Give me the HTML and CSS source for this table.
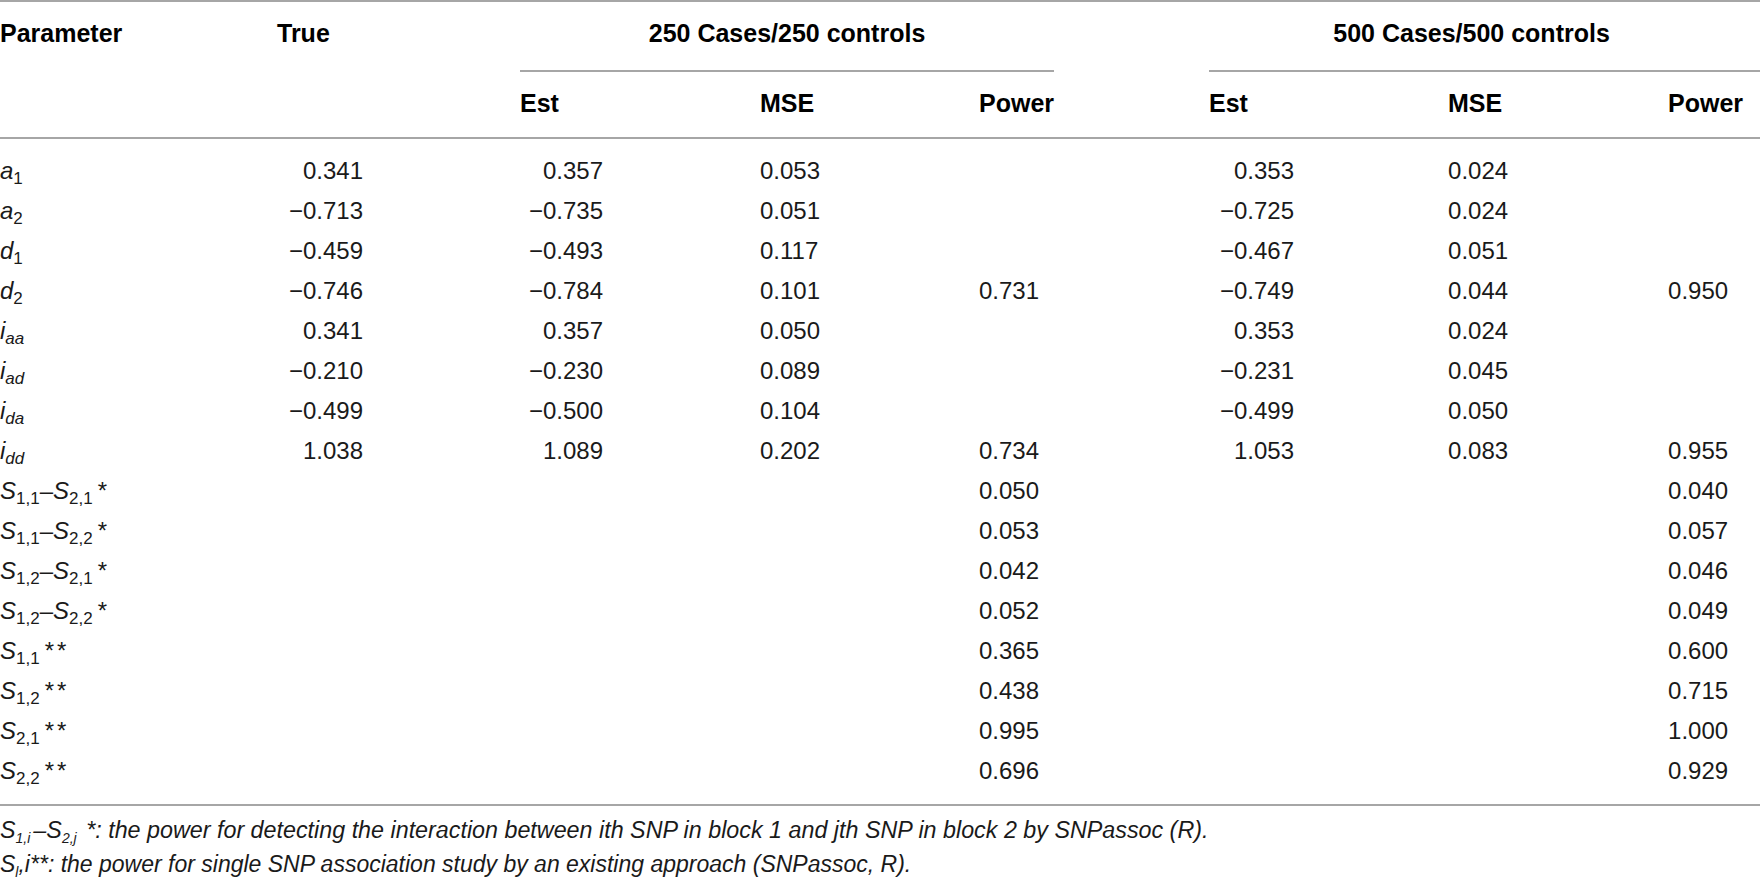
FILE: index.html
```html
<!DOCTYPE html>
<html lang="en">
<head>
    <meta charset="UTF-8">
    <title>Simulation results</title>
    <link rel="stylesheet" href="styles.css">
</head>
<body>
    <table class="results">
        <colgroup>
            <col class="c-param">
            <col class="c-true">
            <col class="c-est">
            <col class="c-mse">
            <col class="c-power">
            <col class="c-est2">
            <col class="c-mse2">
            <col class="c-power2">
        </colgroup>
        <thead>
            <tr class="head-top">
                <th rowspan="2">Parameter</th>
                <th rowspan="2">True</th>
                <th colspan="3" class="group group-a"><div class="group-label">250 Cases/250 controls</div></th>
                <th colspan="3" class="group group-b"><div class="group-label">500 Cases/500 controls</div></th>
            </tr>
            <tr class="head-sub">
                <th>Est</th>
                <th>MSE</th>
                <th>Power</th>
                <th>Est</th>
                <th>MSE</th>
                <th>Power</th>
            </tr>
        </thead>
        <tbody>
            <tr>
                <td class="param"><i>a</i><sub>1</sub></td>
                <td class="num">0.341</td>
                <td class="num">0.357</td>
                <td>0.053</td>
                <td></td>
                <td class="num est2">0.353</td>
                <td>0.024</td>
                <td></td>
            </tr>
            <tr>
                <td class="param"><i>a</i><sub>2</sub></td>
                <td class="num">&minus;0.713</td>
                <td class="num">&minus;0.735</td>
                <td>0.051</td>
                <td></td>
                <td class="num est2">&minus;0.725</td>
                <td>0.024</td>
                <td></td>
            </tr>
            <tr>
                <td class="param"><i>d</i><sub>1</sub></td>
                <td class="num">&minus;0.459</td>
                <td class="num">&minus;0.493</td>
                <td>0.117</td>
                <td></td>
                <td class="num est2">&minus;0.467</td>
                <td>0.051</td>
                <td></td>
            </tr>
            <tr>
                <td class="param"><i>d</i><sub>2</sub></td>
                <td class="num">&minus;0.746</td>
                <td class="num">&minus;0.784</td>
                <td>0.101</td>
                <td>0.731</td>
                <td class="num est2">&minus;0.749</td>
                <td>0.044</td>
                <td>0.950</td>
            </tr>
            <tr>
                <td class="param"><i>i</i><sub><i>aa</i></sub></td>
                <td class="num">0.341</td>
                <td class="num">0.357</td>
                <td>0.050</td>
                <td></td>
                <td class="num est2">0.353</td>
                <td>0.024</td>
                <td></td>
            </tr>
            <tr>
                <td class="param"><i>i</i><sub><i>ad</i></sub></td>
                <td class="num">&minus;0.210</td>
                <td class="num">&minus;0.230</td>
                <td>0.089</td>
                <td></td>
                <td class="num est2">&minus;0.231</td>
                <td>0.045</td>
                <td></td>
            </tr>
            <tr>
                <td class="param"><i>i</i><sub><i>da</i></sub></td>
                <td class="num">&minus;0.499</td>
                <td class="num">&minus;0.500</td>
                <td>0.104</td>
                <td></td>
                <td class="num est2">&minus;0.499</td>
                <td>0.050</td>
                <td></td>
            </tr>
            <tr>
                <td class="param"><i>i</i><sub><i>dd</i></sub></td>
                <td class="num">1.038</td>
                <td class="num">1.089</td>
                <td>0.202</td>
                <td>0.734</td>
                <td class="num est2">1.053</td>
                <td>0.083</td>
                <td>0.955</td>
            </tr>
            <tr>
                <td class="param"><i>S</i><sub>1,1</sub>&ndash;<i>S</i><sub>2,1</sub><span class="mark">*</span></td>
                <td></td><td></td><td></td>
                <td>0.050</td>
                <td></td><td></td>
                <td>0.040</td>
            </tr>
            <tr>
                <td class="param"><i>S</i><sub>1,1</sub>&ndash;<i>S</i><sub>2,2</sub><span class="mark">*</span></td>
                <td></td><td></td><td></td>
                <td>0.053</td>
                <td></td><td></td>
                <td>0.057</td>
            </tr>
            <tr>
                <td class="param"><i>S</i><sub>1,2</sub>&ndash;<i>S</i><sub>2,1</sub><span class="mark">*</span></td>
                <td></td><td></td><td></td>
                <td>0.042</td>
                <td></td><td></td>
                <td>0.046</td>
            </tr>
            <tr>
                <td class="param"><i>S</i><sub>1,2</sub>&ndash;<i>S</i><sub>2,2</sub><span class="mark">*</span></td>
                <td></td><td></td><td></td>
                <td>0.052</td>
                <td></td><td></td>
                <td>0.049</td>
            </tr>
            <tr>
                <td class="param"><i>S</i><sub>1,1</sub><span class="mark">**</span></td>
                <td></td><td></td><td></td>
                <td>0.365</td>
                <td></td><td></td>
                <td>0.600</td>
            </tr>
            <tr>
                <td class="param"><i>S</i><sub>1,2</sub><span class="mark">**</span></td>
                <td></td><td></td><td></td>
                <td>0.438</td>
                <td></td><td></td>
                <td>0.715</td>
            </tr>
            <tr>
                <td class="param"><i>S</i><sub>2,1</sub><span class="mark">**</span></td>
                <td></td><td></td><td></td>
                <td>0.995</td>
                <td></td><td></td>
                <td>1.000</td>
            </tr>
            <tr>
                <td class="param"><i>S</i><sub>2,2</sub><span class="mark">**</span></td>
                <td></td><td></td><td></td>
                <td>0.696</td>
                <td></td><td></td>
                <td>0.929</td>
            </tr>
        </tbody>
    </table>
    <div class="notes">
        <p class="note-pair"><i>S</i><sub>1,<i>i</i></sub>&ndash;<i>S</i><sub>2,<i>j</i></sub> *: the power for detecting the interaction between ith SNP in block 1 and jth SNP in block 2 by SNPassoc (R).</p>
        <p><i>S</i><sub><i>l</i></sub>,<i>i</i>**: the power for single SNP association study by an existing approach (SNPassoc, R).</p>
    </div>
</body>
</html>
```

FILE: styles.css
```css
body {
    margin: 0;
    background: #fff;
    color: #1a1a1a;
    font-family: "Liberation Sans", Arial, sans-serif;
}
.results {
    width: 1760px;
    table-layout: fixed;
    border-collapse: collapse;
    border-top: 2px solid #a6a6a6;
    border-bottom: 2px solid #a6a6a6;
}
.c-param { width: 277px; }
.c-true { width: 243px; }
.c-est { width: 240px; }
.c-mse { width: 219px; }
.c-power { width: 230px; }
.c-est2 { width: 239px; }
.c-mse2 { width: 220px; }
.c-power2 { width: 92px; }

th {
    font-size: 25px;
    line-height: 30px;
    font-weight: bold;
    color: #000;
    text-align: left;
    vertical-align: top;
    padding: 16px 0 0 0;
    white-space: nowrap;
}
.head-sub th {
    padding: 16px 0 19px 0;
}
thead {
    border-bottom: 2px solid #a6a6a6;
}
.group-label {
    text-align: center;
    padding-bottom: 22px;
    border-bottom: 2px solid #a6a6a6;
}
.group-a {
    padding-right: 155px;
}
.group-b .group-label {
    padding-right: 26px;
}

td {
    font-size: 24px;
    line-height: 40px;
    padding: 0;
    white-space: nowrap;
}
tbody tr:first-child td {
    padding-top: 12px;
}
tbody tr:last-child td {
    padding-bottom: 13px;
}
td.num {
    text-align: right;
    padding-right: 157px;
}
td.est2 {
    padding-right: 154px;
}
sub {
    font-size: 17px;
    line-height: 0;
    font-style: normal;
    vertical-align: -5px;
}
.mark {
    margin-left: 5px;
    letter-spacing: 3px;
}

.notes {
    padding-top: 7px;
}
.notes p {
    margin: 0;
    font-size: 23px;
    line-height: 34px;
    font-style: italic;
}
.notes sub {
    font-size: 14px;
    font-style: italic;
    vertical-align: -5px;
}
.notes .note-pair {
    font-size: 23.3px;
}
.note-pair sub {
    margin-right: 3px;
}
```
